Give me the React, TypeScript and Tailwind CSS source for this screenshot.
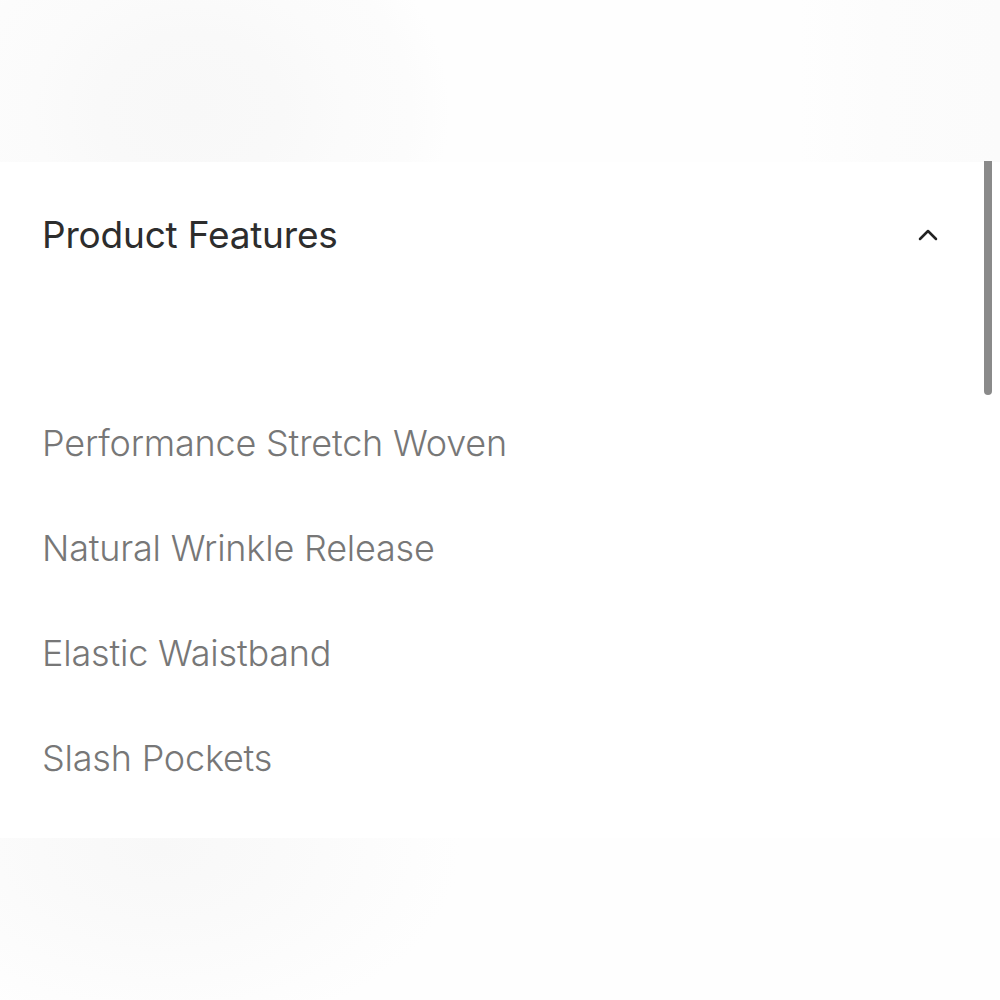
import { ChevronUp } from "lucide-react";

const FONT = "font-['Inter','Noto_Sans',sans-serif]";

const FEATURES = [
  "Performance Stretch Woven",
  "Natural Wrinkle Release",
  "Elastic Waistband",
  "Slash Pockets",
];

export default function App() {
  return (
    <div className={`relative flex h-[1000px] w-[1000px] flex-col overflow-hidden bg-white ${FONT}`}>
      {/* faded product photos above and below the sheet */}
      <div className="flex h-[162px] w-full bg-[radial-gradient(ellipse_260px_220px_at_190px_110px,#f8f8f8_0%,#f9f9f9_35%,#fbfbfb_60%,#fcfcfc_85%,#fefefe_100%)]">
        <div className="flex-1" />
        <div className="w-[200px] bg-[linear-gradient(to_right,#fefefe,#fcfcfc_40%,#fbfbfb)]" />
      </div>

      <section className="flex flex-1 flex-col bg-white pl-[42px] pr-[56px]">
        <div className="flex h-[146px] items-center justify-between">
          <h2 className="text-[37px] font-normal tracking-[-0.2px] text-[#2d2d2d]">Product Features</h2>
          <ChevronUp className="h-[32px] w-[32px] text-[#222]" strokeWidth={1.9} />
        </div>
        <ul className="mt-[82px] flex flex-col">
          {FEATURES.map((f) => (
            <li key={f} className="flex h-[105px] items-center text-[36px] font-light tracking-[-0.2px] text-[#777]">
              {f}
            </li>
          ))}
        </ul>
      </section>

      <div className="h-[162px] w-full bg-[radial-gradient(ellipse_300px_190px_at_160px_10px,#f8f8f8_0%,#fafafa_40%,#fcfcfc_70%,#fefefe_100%)]" />

      {/* scroll indicator */}
      <div className="absolute left-[984px] top-[161px] h-[234px] w-[8px] rounded-b-full bg-[#8a8a8a]" />
    </div>
  );
}
